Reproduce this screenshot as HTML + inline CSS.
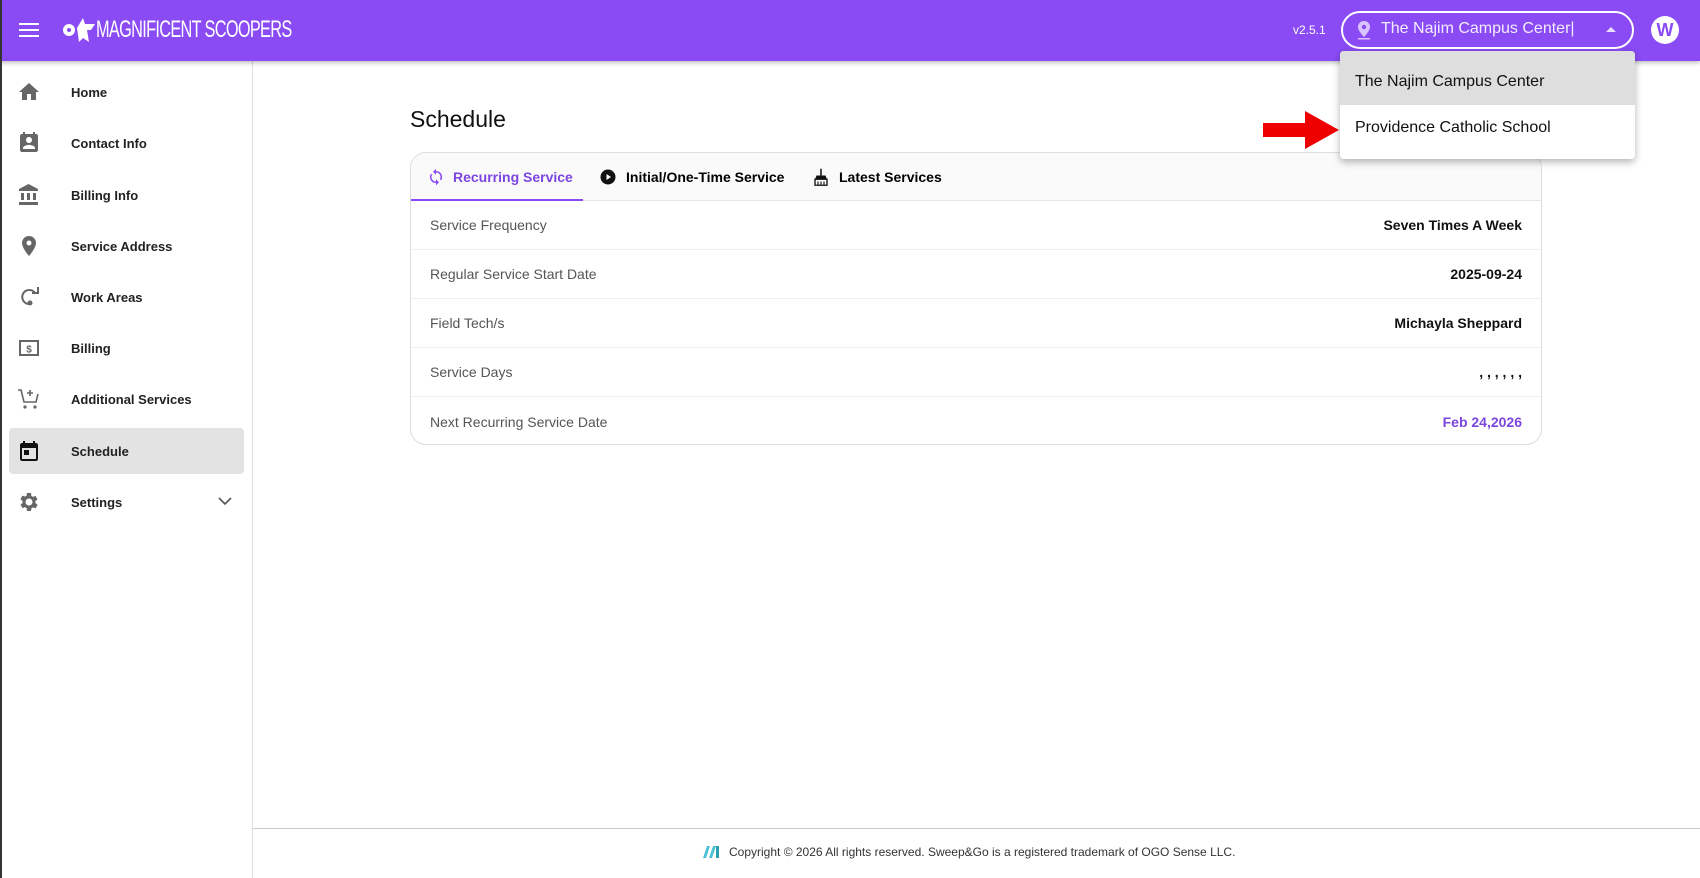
<!DOCTYPE html>
<html><head><meta charset="utf-8"><style>
*{box-sizing:border-box;margin:0;padding:0}
body{width:1700px;height:878px;overflow:hidden;font-family:"Liberation Sans",sans-serif;background:#fff;position:relative}
.hdr{position:absolute;left:0;top:0;width:1700px;height:61px;background:#8a4bf4;box-shadow:0 2px 4px rgba(0,0,0,.25);z-index:2}
.side{position:absolute;left:0;top:61px;width:253px;height:817px;border-right:1px solid #ddd;background:#fff}
.item{position:absolute;left:0;width:253px;height:46px;display:flex;align-items:center;font-size:13px;font-weight:bold;color:#222}
.item .ic{position:absolute;left:17px;top:11px;width:24px;height:24px}
.item span{position:absolute;left:71px}
.sel{position:absolute;left:9px;width:235px;height:46px;background:#e3e3e3;border-radius:4px}
.card{position:absolute;left:410px;top:152px;width:1132px;height:293px;border:1px solid #ddd;border-radius:16px;overflow:hidden}
.tabs{height:48px;background:#fafafa;border-bottom:1px solid #e6e6e6;position:relative;font-size:14px;font-weight:bold}
.tab{position:absolute;top:0;height:48px;display:flex;align-items:center}
.row{height:49px;border-bottom:1px solid #eee;display:flex;align-items:center;justify-content:space-between;padding:0 19px;font-size:14px;color:#555}
.row b{color:#111;font-size:14px}
</style></head><body>
<div style="position:absolute;left:0;top:0;width:2px;height:878px;background:#333;z-index:5"></div>
<div class="hdr">
 <svg style="position:absolute;left:19px;top:22px" width="20" height="16"><rect y="1" width="20" height="2" fill="#fff"/><rect y="7" width="20" height="2" fill="#fff"/><rect y="13" width="20" height="2" fill="#fff"/></svg>
 <svg style="position:absolute;left:61px;top:16px" width="36" height="26"><circle cx="8" cy="14" r="6" fill="#fff"/><circle cx="8" cy="14" r="2" fill="#8a4bf4"/><path d="M16 12 L22 2 L24 8 L34 8 L30 14 L26 14 L28 26 L22 22 L18 26 Z" fill="#fff"/></svg>
 <div style="position:absolute;left:96px;top:16px;color:#fff;font-family:'Liberation Sans Narrow','Liberation Sans',sans-serif;font-size:24px;letter-spacing:-1px;transform:scaleX(.68);transform-origin:left;font-weight:300">MAGNIFICENT SCOOPERS</div>
 <div style="position:absolute;left:1293px;top:23px;color:#fff;font-size:12px">v2.5.1</div>
 <div style="position:absolute;left:1341px;top:11px;width:293px;height:38px;border:2px solid #fff;border-radius:20px"></div>
 <svg style="position:absolute;left:1357px;top:20px" width="14" height="20"><path d="M7 1C3.5 1 1 3.6 1 7c0 4 6 10 6 10s6-6 6-10c0-3.4-2.5-6-6-6z" fill="#d9c4ff"/><circle cx="7" cy="7" r="2.2" fill="#8a4bf4"/><rect x="1" y="18" width="12" height="1.5" fill="#d9c4ff"/></svg>
 <div style="position:absolute;left:1381px;top:20px;color:#f3ecff;font-size:16px">The Najim Campus Center|</div>
 <svg style="position:absolute;left:1605px;top:26px" width="12" height="8"><path d="M1 6L6 1L11 6Z" fill="#e8dcff"/></svg>
 <div style="position:absolute;left:1651px;top:16px;width:28px;height:28px;border-radius:50%;background:#fff;color:#8a4bf4;font-weight:bold;font-size:18px;text-align:center;line-height:28px">W</div>
</div>
<div class="side">
 <div class="sel" style="top:367px"></div>
 <div class="item" style="top:8px"><svg class="ic" viewBox="0 0 24 24"><path d="M10 20v-6h4v6h5v-8h3L12 3 2 12h3v8z" fill="#666"/></svg><span>Home</span></div>
 <div class="item" style="top:59px"><svg class="ic" viewBox="0 0 24 24"><path d="M19 3h-1V1h-2v2H8V1H6v2H5c-1.1 0-2 .9-2 2v14c0 1.1.9 2 2 2h14c1.1 0 2-.9 2-2V5c0-1.1-.9-2-2-2zm-7 3c1.7 0 3 1.3 3 3s-1.3 3-3 3-3-1.3-3-3 1.3-3 3-3zm6 12H6v-1c0-2 4-3.1 6-3.1s6 1.1 6 3.1v1z" fill="#666"/></svg><span>Contact Info</span></div>
 <div class="item" style="top:111px"><svg class="ic" viewBox="0 0 24 24"><path d="M4 10v7h3v-7H4zm6 0v7h3v-7h-3zM2 22h19v-3H2v3zm14-12v7h3v-7h-3zM11.5 1L2 6v2h19V6l-9.5-5z" fill="#666"/></svg><span>Billing Info</span></div>
 <div class="item" style="top:162px"><svg class="ic" viewBox="0 0 24 24"><path d="M12 2C8.1 2 5 5.1 5 9c0 5.2 7 13 7 13s7-7.8 7-13c0-3.9-3.1-7-7-7zm0 9.5a2.5 2.5 0 110-5 2.5 2.5 0 010 5z" fill="#666"/></svg><span>Service Address</span></div>
 <div class="item" style="top:213px"><svg class="ic" viewBox="0 0 24 24"><path d="M18 8a7 7 0 10-6 11" stroke="#666" stroke-width="2" fill="none"/><path d="M15 8h6V2" stroke="#666" stroke-width="2" fill="none"/><circle cx="13" cy="18" r="2.5" fill="#666"/></svg><span>Work Areas</span></div>
 <div class="item" style="top:264px"><svg class="ic" viewBox="0 0 24 24"><rect x="3" y="5" width="18" height="14" fill="none" stroke="#666" stroke-width="2"/><text x="12" y="16.5" font-size="10" font-weight="bold" text-anchor="middle" fill="#666" font-family="Liberation Sans">$</text></svg><span>Billing</span></div>
 <div class="item" style="top:315px"><svg class="ic" viewBox="0 0 24 24"><path d="M1 3h3l3 12h12l2-8" stroke="#666" stroke-width="1.6" fill="none"/><path d="M13 3v6M10 6h6" stroke="#666" stroke-width="1.6"/><circle cx="8" cy="20" r="1.6" fill="#666"/><circle cx="18" cy="20" r="1.6" fill="#666"/></svg><span>Additional Services</span></div>
 <div class="item" style="top:367px"><svg class="ic" viewBox="0 0 24 24"><path d="M19 4h-1V2h-2v2H8V2H6v2H5c-1.1 0-2 .9-2 2v14c0 1.1.9 2 2 2h14c1.1 0 2-.9 2-2V6c0-1.1-.9-2-2-2zm0 16H5V9h14v11zM7 11h5v5H7z" fill="#111"/></svg><span>Schedule</span></div>
 <div class="item" style="top:418px"><svg class="ic" viewBox="0 0 24 24"><path d="M19.4 13a7.5 7.5 0 000-2l2.1-1.6-2-3.5-2.5 1a7 7 0 00-1.7-1L15 3h-4l-.4 2.6a7 7 0 00-1.7 1l-2.5-1-2 3.5L6.6 11a7.5 7.5 0 000 2l-2.1 1.6 2 3.5 2.5-1c.5.4 1.1.8 1.7 1L11 21h4l.4-2.6c.6-.3 1.2-.6 1.7-1l2.5 1 2-3.5L19.4 13zM13 15.5a3.5 3.5 0 110-7 3.5 3.5 0 010 7z" fill="#666" transform="translate(-1 0)"/></svg><span>Settings</span>
 <svg style="position:absolute;left:218px;top:18px" width="14" height="9"><path d="M1 1l6 6 6-6" stroke="#555" stroke-width="1.6" fill="none"/></svg></div>
</div>
<div style="position:absolute;left:410px;top:106px;font-size:23px;color:#111">Schedule</div>
<div class="card">
 <div class="tabs">
  <div style="position:absolute;left:0;bottom:-1px;width:172px;height:2px;background:#8a4bf4"></div>
  <div class="tab" style="left:16px;color:#7c45e0"><svg width="18" height="18" viewBox="0 0 24 24"><path d="M12 4V1L8 5l4 4V6a6 6 0 015.2 9l1.5 1.5A8 8 0 0012 4zm0 14a6 6 0 01-5.2-9L5.3 7.5A8 8 0 0012 20v3l4-4-4-4v3z" fill="#8a4bf4"/></svg><span style="margin-left:8px">Recurring Service</span></div>
  <div class="tab" style="left:188px"><svg width="18" height="18" viewBox="0 0 24 24"><circle cx="12" cy="12" r="10" fill="#111"/><path d="M10 8l6 4-6 4z" fill="#fff"/></svg><span style="margin-left:9px">Initial/One-Time Service</span></div>
  <div class="tab" style="left:401px"><svg width="18" height="20" viewBox="0 0 24 24"><rect x="11" y="1" width="2" height="9" fill="#111"/><path d="M6 10h12l2 5H4z" fill="#111"/><path d="M4 15h16v8H4z" fill="none" stroke="#111" stroke-width="1.8"/><path d="M8 18v5M12 18v5M16 18v5" stroke="#111" stroke-width="1.5"/></svg><span style="margin-left:9px">Latest Services</span></div>
 </div>
 <div class="row"><span>Service Frequency</span><b>Seven Times A Week</b></div>
 <div class="row"><span>Regular Service Start Date</span><b>2025-09-24</b></div>
 <div class="row"><span>Field Tech/s</span><b>Michayla Sheppard</b></div>
 <div class="row"><span>Service Days</span><b>, , , , , ,</b></div>
 <div class="row" style="border:none"><span>Next Recurring Service Date</span><b style="color:#7c45e0">Feb 24,2026</b></div>
</div>
<div style="position:absolute;left:1340px;top:51px;width:295px;height:108px;background:#fff;border-radius:4px;box-shadow:0 3px 8px rgba(0,0,0,.3);z-index:3;overflow:hidden;font-size:16px;color:#111">
 <div style="height:54px;background:#dedede;padding:22px 0 0 15px">The Najim Campus Center</div>
 <div style="padding:14px 0 0 15px">Providence Catholic School</div>
</div>
<svg style="position:absolute;left:1263px;top:110px" width="78" height="40"><path d="M0 13h42V1l34 19-34 19V27H0z" fill="#ee0000"/></svg>
<div style="position:absolute;left:253px;top:828px;width:1447px;height:1px;background:#ccc"></div>
<div style="position:absolute;left:700px;top:845px;display:flex;align-items:center;font-size:12px;color:#333">
 <svg width="20" height="14"><path d="M3 13l4-12h3L6 13zM9 13l4-12h3l-4 12z" fill="#4fc1d6"/><rect x="16" y="1" width="3" height="12" fill="#2a9fb3"/></svg>
 <span style="margin-left:9px">Copyright © 2026 All rights reserved. Sweep&amp;Go is a registered trademark of OGO Sense LLC.</span>
</div>
</body></html>
